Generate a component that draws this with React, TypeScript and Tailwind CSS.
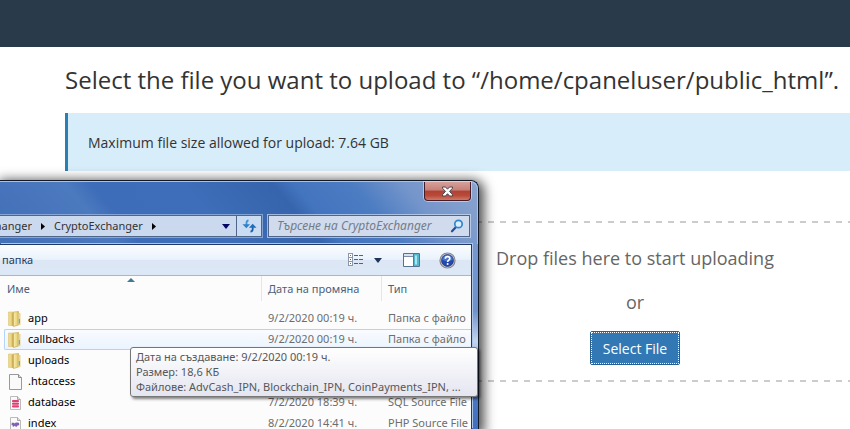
import React from "react";

type FileKind = "folder" | "blank" | "sql" | "php";

type FileRow = { name: string; date: string; type: string; kind: FileKind; selected?: boolean };

const files: FileRow[] = [
  { name: "app", date: "9/2/2020 00:19 ч.", type: "Папка с файло", kind: "folder" },
  { name: "callbacks", date: "9/2/2020 00:19 ч.", type: "Папка с файло", kind: "folder", selected: true },
  { name: "uploads", date: "9/2/2020 00:19 ч.", type: "Папка с файло", kind: "folder" },
  { name: ".htaccess", date: "9/2/2020 00:19 ч.", type: "HTACCESS File", kind: "blank" },
  { name: "database", date: "7/2/2020 18:39 ч.", type: "SQL Source File", kind: "sql" },
  { name: "index", date: "8/2/2020 14:41 ч.", type: "PHP Source File", kind: "php" },
];

function FileIcon({ kind }: { kind: FileKind }) {
  if (kind === "folder") {
    return (
      <svg width="16" height="16" viewBox="0 0 16 16" aria-hidden="true" className="shrink-0">
        <defs>
          <linearGradient id="folderFront" x1="0" x2="1">
            <stop offset="0" stopColor="#f9edb0" />
            <stop offset="0.6" stopColor="#ecd67e" />
            <stop offset="1" stopColor="#d3b352" />
          </linearGradient>
        </defs>
        <path d="M1.500 1h5v13.500h-5z" fill="#ecd98b" stroke="#dcc474" strokeWidth=".6" />
        <path d="M6.500 1 11.500.5V14l-5 1.500z" fill="url(#folderFront)" stroke="#c5a548" strokeWidth=".6" />
        <path d="M4.700 2 6.500 1v14.500l-1.800-1z" fill="#cfb05a" />
        <path d="M11.500 2h2v12l-2 .5z" fill="#e9d690" />
        <path d="M11.800 8H13v4.500h-1.200z" fill="#55aee8" />
      </svg>
    );
  }
  const small = kind !== "blank";
  return (
    <svg width="16" height="16" viewBox="0 0 16 16" aria-hidden="true" className="shrink-0">
      {small ? (
        <>
          <path d="M3.500 1.500h7l3 3v10h-10z" fill="#fafafa" stroke="#bbb" />
          <path d="M10.500 1.500v3h3" fill="#ddd" stroke="#a8a8a8" />
        </>
      ) : (
        <>
          <path d="M2.500.5h9l3 3v12h-12z" fill="#fafafa" stroke="#999" />
          <path d="M11.500.5v3h3" fill="#e2e2e2" stroke="#8b8b8b" />
        </>
      )}
      {kind === "sql" && (
        <g fill="#df3d74">
          <rect x="5" y="5" width="7" height="2.300" rx="1" />
          <rect x="5" y="7.800" width="7" height="1.900" rx=".8" />
          <rect x="5" y="10.200" width="7" height="2.300" rx="1" />
        </g>
      )}
      {kind === "php" && (
        <path d="M4.800 6.800h2l1 .6 1-.8H10l1.800.2.6 1.400-.8 1.300h-1.200l-.6 1.200H8.600l-.5-.9-1 .5-1.200.8-.2-1.500-1.200-.6z" fill="#8260b4" />
      )}
    </svg>
  );
}

function ExplorerWindow() {
  return (
    <section
      aria-label="CryptoExchanger"
      className="absolute top-[180px] bottom-0 left-0 w-[479px] rounded-tr-lg border-t border-r border-[#121a28] bg-[linear-gradient(180deg,#829fce_0px,#7195cf_90px,#6f92cc_130px,#c4d5ee_160px,#4a77c3_215px,#416fbd_250px)] font-['Noto_Sans',sans-serif] text-[11px] shadow-[2px_3px_12px_3px_rgba(0,0,0,0.7)]"
    >
      <div className="rounded-tr-lg border-t border-r border-[#a9c1e4] bg-[linear-gradient(50deg,#4270b8_0%,#4774bb_12%,#4c7abf_22%,#3d6cb8_27%,#3e6eb9_44%,#3766ae_58%,#3665ad_61%,#4374be_65%,#4c7cc2_76%,#7596cb_86%,#8ba4ce_100%)]">
        <header className="flex h-[33px] justify-end pr-[6px]">
          <button
            type="button"
            aria-label="Close"
            className="flex h-[19px] w-[47px] items-center justify-center rounded-b border border-t-0 border-[#471c29] bg-[linear-gradient(180deg,#d5a09b_0%,#c68078_45%,#b04232_50%,#b94a3a_75%,#cd7a66_100%)] shadow-[0_0_0_1px_rgba(220,230,245,0.6)]"
          >
            <svg width="13" height="11" viewBox="0 0 13 11" aria-hidden="true">
              <path d="M1.500 1h3l2 2.200L8.500 1h3v1.200L8.500 5.400l3 3.300V10h-3l-2-2.300L4.500 10h-3V8.700l3-3.300-3-3.200z" fill="#fff" stroke="#4c4650" strokeWidth="1" />
            </svg>
          </button>
        </header>
        <div className="flex gap-[6px] pr-[7px] pb-[7px]">
          <nav aria-label="Address" className="flex h-[22px] flex-1 items-center border border-l-0 border-[#4f6689] bg-[#cbd9ee] shadow-[0_0_0_1px_rgba(190,208,235,0.55)]">
            <button type="button" className="w-8 overflow-hidden whitespace-nowrap">
              <span className="float-right">CryptoExchanger</span>
            </button>
            <svg width="22" height="9" viewBox="0 0 22 9" aria-hidden="true"><path d="M9 1v7l4-3.500z" fill="#000" /></svg>
            <button type="button">CryptoExchanger</button>
            <svg width="22" height="9" viewBox="0 0 22 9" aria-hidden="true"><path d="M9 1v7l4-3.500z" fill="#000" /></svg>
            <button type="button" aria-label="Previous locations" className="ml-auto flex h-full w-5 items-center justify-center">
              <svg width="8" height="5" viewBox="0 0 8 5" aria-hidden="true"><path d="M0 0h8L4 5z" fill="#050566" /></svg>
            </button>
            <button type="button" aria-label="Refresh" className="flex h-full w-[25px] items-center justify-center border-l border-[#4f6689] bg-[#c9dcf2]">
              <svg width="15" height="14" viewBox="0 0 15 14" aria-hidden="true" fill="none">
                <path d="M6.500 1.500C5 1.500 4.500 2.500 4.500 4v2" stroke="#3f93d8" strokeWidth="1.800" />
                <path d="M.5 5.300h7.600L4.300 9.300z" fill="#2d80ca" />
                <path d="M8.500 12.500c1.500 0 2.200-1 2.200-2.500V8" stroke="#1a5faa" strokeWidth="1.800" />
                <path d="M6.900 8.700h7.600L10.700 4.700z" fill="#216db9" />
              </svg>
            </button>
          </nav>
          <div className="flex h-[22px] w-[202px] items-center border border-[#4f6689] bg-[#d0dbed] pr-[5px] pl-2 shadow-[0_0_0_1px_rgba(205,219,240,0.7)]">
            <input
              type="search"
              aria-label="Търсене на CryptoExchanger"
              placeholder="Търсене на CryptoExchanger"
              className="min-w-0 flex-1 bg-transparent text-xs italic outline-none placeholder:text-[#757c88]"
            />
            <svg width="14" height="14" viewBox="0 0 14 14" aria-hidden="true" fill="none">
              <path d="M6 8 2 12.300" stroke="#284f8e" strokeWidth="2.200" strokeLinecap="round" />
              <circle cx="8.500" cy="5" r="3.700" fill="#dcefff" stroke="#3185cd" strokeWidth="1.700" />
            </svg>
          </div>
        </div>
      </div>

      <div className="absolute top-[63px] right-[6px] bottom-0 left-0 overflow-hidden border-t border-r border-[#1f3769] bg-[#fcfcfc] shadow-[1px_-1px_0_0_#adc5e8]">
        <div role="toolbar" aria-label="Folder tools" className="flex h-[31px] items-center border-b border-[#a7b7cf] bg-[linear-gradient(180deg,#fbfdff_0%,#e9f2fc_48%,#dce6f4_50%,#dde8f6_100%)] text-[#1e395b]">
          <button type="button" className="ml-[2px]">папка</button>
          <button type="button" aria-label="Change view" className="ml-auto">
            <svg width="16" height="14" viewBox="0 0 16 14" aria-hidden="true" fill="none">
              <g fill="#fff" stroke="#8b98ab">
                <rect x=".5" y=".5" width="4" height="4" />
                <rect x=".5" y="4.500" width="4" height="4" />
                <rect x=".5" y="8.500" width="4" height="4" />
              </g>
              <path d="M2 2h1v1H2zM2 10h1v1H2z" fill="#4d75a8" />
              <path d="M2 6h1v1H2z" fill="#d22" />
              <path d="M6 2.500h4m1 0h4M6 6.500h4m1 0h4M6 10.500h4m1 0h4" stroke="#50627e" />
            </svg>
          </button>
          <button type="button" aria-label="View options" className="ml-[10px]">
            <svg width="8" height="5" viewBox="0 0 8 5" aria-hidden="true"><path d="M0 0h8L4 5z" fill="#1e3458" /></svg>
          </button>
          <button type="button" aria-label="Preview pane" className="ml-[21px]">
            <svg width="17" height="14" viewBox="0 0 17 14" aria-hidden="true">
              <path d="M.5.5h16v13H.5z" fill="#fff" stroke="#58718e" />
              <path d="M1 1h10v2H1z" fill="#d7e2ef" />
              <path d="M1 3.500h9.500" stroke="#7b8da6" />
              <path d="M10.500 1h5.500v12h-5.500z" fill="#55b6ce" />
              <path d="M12 2.500h2v9h-2z" fill="#a4e7f1" />
              <path d="M10.500 1v12" stroke="#50789b" />
            </svg>
          </button>
          <button type="button" aria-label="Help" className="mr-[15px] ml-[19px]">
            <svg width="17" height="17" viewBox="0 0 17 17" aria-hidden="true" fill="none">
              <circle cx="8.500" cy="8.500" r="7.500" fill="#d5d8de" stroke="#85868c" strokeWidth="1.200" />
              <circle cx="8.500" cy="8.500" r="6" fill="#2349ad" stroke="#1c2e75" strokeWidth=".7" />
              <path d="M3.200 8a5.300 5.300 0 0 1 10.600 0c-3 1.500-7.500 1.500-10.600 0z" fill="#4a72c8" />
              <path d="M6.300 6.800c0-3 4.600-2.900 4.500-.3 0 1.700-2.200 1.500-2.200 3.500" stroke="#fff" strokeWidth="1.700" />
              <circle cx="8.600" cy="12" r="1" fill="#fff" />
            </svg>
          </button>
        </div>

        <table className="w-full table-fixed border-separate border-spacing-0 text-left whitespace-nowrap">
          <colgroup>
            <col className="w-[261px]" />
            <col className="w-[120px]" />
            <col />
          </colgroup>
          <thead>
            <tr className="h-8 align-top leading-[26px] text-[#4c607a]">
              <th scope="col" aria-sort="ascending" className="relative pl-[7px] font-normal">
                Име
                <svg width="8" height="4" viewBox="0 0 8 4" aria-hidden="true" className="absolute top-[2px] left-[127px]"><path d="M0 4 4 0l4 4z" fill="#417892" /></svg>
              </th>
              <th scope="col" className="bg-[linear-gradient(90deg,#dfe7f2_1px,transparent_1px)] bg-[length:100%_25px] bg-no-repeat pl-[7px] font-normal">Дата на промяна</th>
              <th scope="col" className="bg-[linear-gradient(90deg,#dfe7f2_1px,transparent_1px)] bg-[length:100%_25px] bg-no-repeat pl-[7px] font-normal">Тип</th>
            </tr>
          </thead>
          <tbody>
            {files.map((f) => (
              <tr
                key={f.name}
                className={
                  f.selected
                    ? "h-[21px] bg-[linear-gradient(180deg,#fafcff,#eaf3fe)] text-[#6d6d6d] *:border-y *:border-[#b3d4f8]"
                    : "h-[21px] text-[#6d6d6d] *:border-y *:border-transparent"
                }
              >
                <td className="relative p-0 text-black">
                  {f.selected && <span className="absolute inset-y-[-1px] left-0 w-[6px] bg-[#fcfcfc] after:absolute after:inset-y-0 after:right-0 after:w-[2px] after:rounded-l after:border after:border-r-0 after:border-[#b3d4f8] after:bg-[#f5faff]" />}
                  <span className="relative flex h-[19px] items-center gap-[5px] pl-[7px]">
                    <FileIcon kind={f.kind} />
                    {f.name}
                  </span>
                </td>
                <td className="p-0 pl-[7px]">{f.date}</td>
                <td className="p-0 pl-[7px]">{f.type}</td>
              </tr>
            ))}
          </tbody>
        </table>
      </div>

      <div
        role="tooltip"
        className="absolute top-[166px] left-[130px] w-[348px] rounded-[3px] border border-[#767676] bg-[linear-gradient(180deg,#ffffff,#e4e5f0)] px-[5px] pt-px pb-[2px] leading-[15px] whitespace-nowrap text-[#575757] shadow-[2px_2px_3px_rgba(0,0,0,0.5)]"
      >
        <p>Дата на създаване: 9/2/2020 00:19 ч.</p>
        <p>Размер: 18,6 КБ</p>
        <p>Файлове: AdvCash_IPN, Blockchain_IPN, CoinPayments_IPN, ...</p>
      </div>
    </section>
  );
}

export default function App() {
  return (
    <div className="relative h-screen overflow-hidden bg-white font-['Open_Sans','Noto_Sans',sans-serif] text-[#333]">
      <header className="h-[47px] bg-[#293a4a]" />
      <main className="pl-[65px]">
        <h1 className="pt-4 text-2xl leading-[34px] whitespace-nowrap">
          Select the file you want to upload to “/home/cpaneluser/public_html”.
        </h1>
        <div className="mt-4 border-l-3 border-[#2a80b2] bg-[#d7edf9] px-5 pt-5 pb-[18px] text-sm leading-5">
          Maximum file size allowed for upload: 7.64 GB
        </div>
        <section
          aria-label="Drop files"
          className="mt-[50px] flex flex-col items-center bg-[image:repeating-linear-gradient(90deg,transparent_0px_3px,#ccc_3px_9px,transparent_9px_12px),repeating-linear-gradient(90deg,transparent_0px_3px,#ccc_3px_9px,transparent_9px_12px)] bg-[length:100%_2px] bg-[position:0_0,0_100%] bg-no-repeat pt-[25px] pb-[17px] pl-[355px] text-lg leading-6 text-[#666]"
        >
          <p>Drop files here to start uploading</p>
          <p className="mt-5">or</p>
          <button
            type="button"
            className="mt-[17px] rounded-[2px] border border-[#255f92] bg-[#3178b5] p-0 text-sm leading-5 text-white"
          >
            <span className="block border border-dotted border-white px-[11px] pt-[6px] pb-1">Select File</span>
          </button>
        </section>
      </main>
      <ExplorerWindow />
    </div>
  );
}
